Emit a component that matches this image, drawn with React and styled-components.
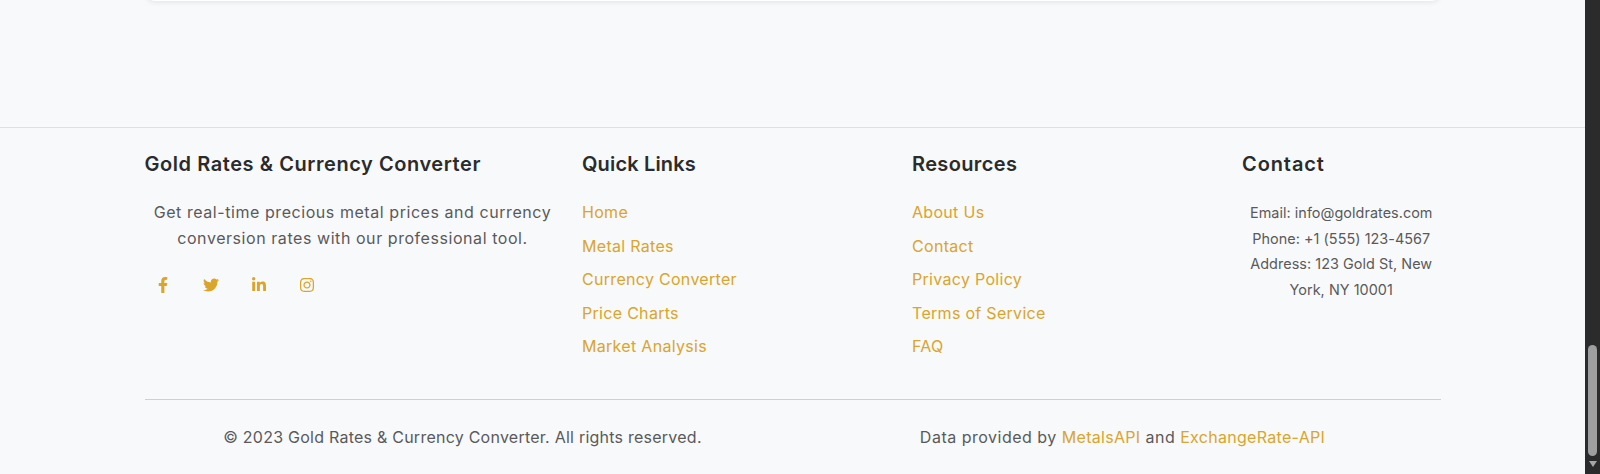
import React from "react";
import styled, { createGlobalStyle } from "styled-components";
import { FaFacebookF, FaTwitter, FaLinkedinIn, FaInstagram } from "react-icons/fa";

const GOLD = "#d9a52c";

const GlobalStyle = createGlobalStyle`
  html, body {
    margin: 0;
    height: 100%;
    overflow: hidden;
    background: #f8f9fa;
  }
  * { box-sizing: border-box; }
`;

const Screen = styled.div`
  display: flex;
  width: 1600px;
  height: 474px;
  overflow: hidden;
  font-family: Inter, "Open Sans", sans-serif;
  font-size: 16px;
  line-height: 25.6px;
  color: #5a5a5a;
`;

const Page = styled.div`
  flex: 1;
  min-width: 0;
  background: #f8f9fa;
`;

const CardEnd = styled.div`
  width: 1296px;
  height: 20px;
  margin: -19px auto 0;
  background: #fff;
  border-radius: 12px;
  box-shadow: 0 2px 5px rgba(0, 0, 0, 0.07);
`;

const Footer = styled.footer`
  margin-top: 126px;
  padding-top: 20px;
  border-top: 1px solid #e0e0e0;
`;

const Container = styled.div`
  width: 1296px;
  margin: 0 auto;
`;

const Columns = styled.div`
  display: grid;
  grid-template-columns: 416px 308.5px 308.5px 1fr;
  column-gap: 21.5px;
`;

const Heading = styled.h3`
  margin: 0 0 20px;
  font-size: 20px;
  line-height: 32px;
  font-weight: 600;
  letter-spacing: ${(p) => p.$tracking}px;
  color: #2b2b2b;
`;

const Blurb = styled.p`
  margin: 0 0 16px;
  text-align: center;
  letter-spacing: 0.56px;
`;

const Socials = styled.div`
  display: flex;
  gap: 12px;
`;

const SocialLink = styled.a`
  display: flex;
  align-items: center;
  justify-content: center;
  width: 36px;
  height: 36px;
  border-radius: 50%;
  color: ${GOLD};
  font-size: 16px;
`;

const LinkList = styled.ul`
  margin: 0;
  padding: 0;
  list-style: none;
`;

const LinkItem = styled.li`
  margin-bottom: 8px;
`;

const GoldLink = styled.a`
  color: ${GOLD};
  text-decoration: none;
  letter-spacing: 0.3px;
`;

const ContactLine = styled.p`
  margin: 0;
  text-align: center;
  font-size: 14.4px;
  letter-spacing: 0.05px;
`;

const BottomBar = styled.div`
  display: grid;
  grid-template-columns: 1fr 1fr;
  column-gap: 24px;
  margin-top: 31px;
  padding-top: 25px;
  border-top: 1px solid #ced0d6;
  text-align: center;
`;

const BottomText = styled.div`
  letter-spacing: ${(p) => p.$tracking}px;
`;

const Scrollbar = styled.div`
  display: flex;
  flex-direction: column;
  align-items: center;
  justify-content: flex-end;
  width: 15px;
  padding-bottom: 7px;
  background: #2b2b2b;
`;

const ScrollThumb = styled.div`
  width: 9px;
  height: 111px;
  margin-bottom: 5px;
  border-radius: 5px;
  background: #9f9f9f;
`;

const ScrollArrow = styled.div`
  width: 0;
  height: 0;
  border-left: 4.5px solid transparent;
  border-right: 4.5px solid transparent;
  border-top: 6px solid #a6a6a6;
`;

const quickLinks = ["Home", "Metal Rates", "Currency Converter", "Price Charts", "Market Analysis"];
const resources = ["About Us", "Contact", "Privacy Policy", "Terms of Service", "FAQ"];
const socials = [FaFacebookF, FaTwitter, FaLinkedinIn, FaInstagram];
const contact = ["Email: info@goldrates.com", "Phone: +1 (555) 123-4567", "Address: 123 Gold St, New York, NY 10001"];

const App = () => (
  <Screen>
    <GlobalStyle />
    <Page>
      <CardEnd />
      <Footer>
        <Container>
          <Columns>
            <div>
              <Heading $tracking={0.56}>Gold Rates &amp; Currency Converter</Heading>
              <Blurb>Get real-time precious metal prices and currency conversion rates with our professional tool.</Blurb>
              <Socials>
                {socials.map((Icon, i) => (
                  <SocialLink key={i} href="#">
                    <Icon />
                  </SocialLink>
                ))}
              </Socials>
            </div>
            <div>
              <Heading $tracking={0.16}>Quick Links</Heading>
              <LinkList>
                {quickLinks.map((item) => (
                  <LinkItem key={item}>
                    <GoldLink href="#">{item}</GoldLink>
                  </LinkItem>
                ))}
              </LinkList>
            </div>
            <div>
              <Heading $tracking={0.36}>Resources</Heading>
              <LinkList>
                {resources.map((item) => (
                  <LinkItem key={item}>
                    <GoldLink href="#">{item}</GoldLink>
                  </LinkItem>
                ))}
              </LinkList>
            </div>
            <div>
              <Heading $tracking={0.9}>Contact</Heading>
              {contact.map((line) => (
                <ContactLine key={line}>{line}</ContactLine>
              ))}
            </div>
          </Columns>
          <BottomBar>
            <BottomText $tracking={0.24}>© 2023 Gold Rates &amp; Currency Converter. All rights reserved.</BottomText>
            <BottomText $tracking={0.5}>
              Data provided by <GoldLink href="#">MetalsAPI</GoldLink> and <GoldLink href="#">ExchangeRate-API</GoldLink>
            </BottomText>
          </BottomBar>
        </Container>
      </Footer>
    </Page>
    <Scrollbar>
      <ScrollThumb />
      <ScrollArrow />
    </Scrollbar>
  </Screen>
);

export default App;
